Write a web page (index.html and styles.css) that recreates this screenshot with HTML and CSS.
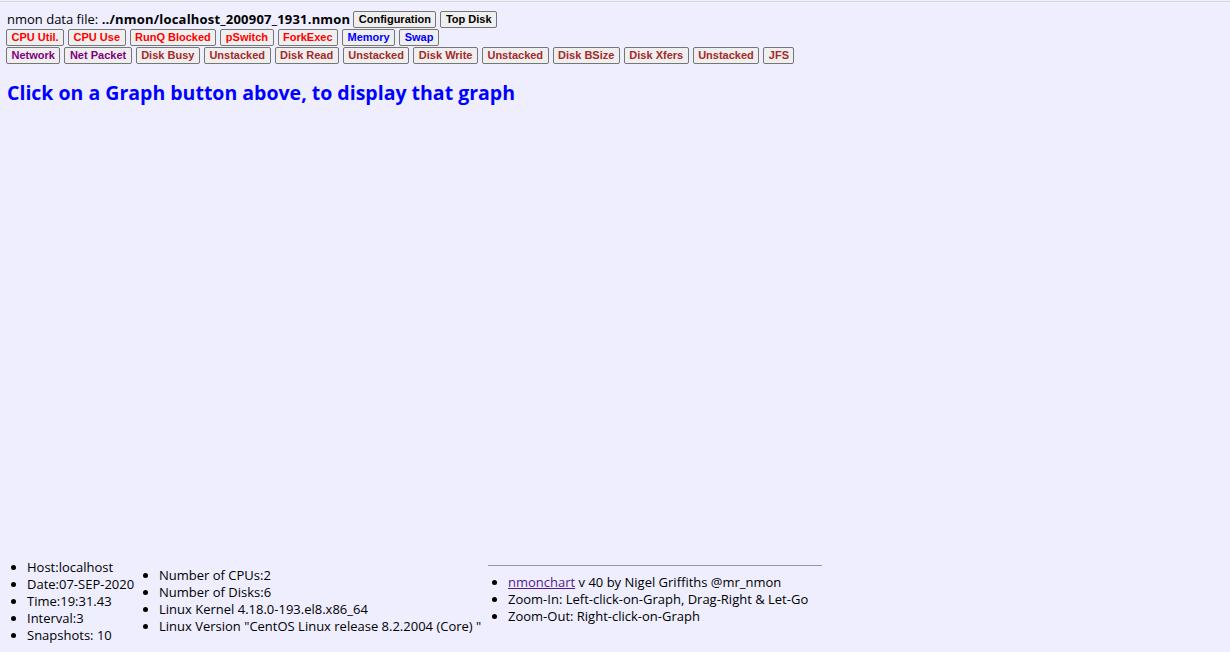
FILE: index.html
```html
<!DOCTYPE html>
<html>
<head>
<meta charset="utf-8">
<title>nmonchart</title>
<link rel="stylesheet" href="styles.css">
</head>
<body>
<div class="page">
  <div class="row">
    <span class="label">nmon data file: <b>../nmon/localhost_200907_1931.nmon</b></span>
    <button class="btn black">Configuration</button>
    <button class="btn black">Top Disk</button>
  </div>
  <div class="row">
    <button class="btn red">CPU Util.</button>
    <button class="btn red">CPU Use</button>
    <button class="btn red">RunQ Blocked</button>
    <button class="btn red">pSwitch</button>
    <button class="btn red">ForkExec</button>
    <button class="btn blue">Memory</button>
    <button class="btn blue">Swap</button>
  </div>
  <div class="row">
    <button class="btn purple">Network</button>
    <button class="btn purple">Net Packet</button>
    <button class="btn brown">Disk Busy</button>
    <button class="btn brown">Unstacked</button>
    <button class="btn brown">Disk Read</button>
    <button class="btn brown">Unstacked</button>
    <button class="btn brown">Disk Write</button>
    <button class="btn brown">Unstacked</button>
    <button class="btn brown">Disk BSize</button>
    <button class="btn brown">Disk Xfers</button>
    <button class="btn brown">Unstacked</button>
    <button class="btn brown">JFS</button>
  </div>
  <h3 class="title">Click on a Graph button above, to display that graph</h3>
  <div class="graph"></div>
  <div class="info">
    <div class="cell first">
      <ul class="list">
        <li>Host:localhost</li>
        <li>Date:07-SEP-2020</li>
        <li>Time:19:31.43</li>
        <li>Interval:3</li>
        <li>Snapshots: 10</li>
      </ul>
    </div>
    <div class="cell second">
      <ul class="list">
        <li>Number of CPUs:2</li>
        <li>Number of Disks:6</li>
        <li>Linux Kernel 4.18.0-193.el8.x86_64</li>
        <li>Linux Version "CentOS Linux release 8.2.2004 (Core) "</li>
      </ul>
    </div>
    <div class="cell third">
      <hr class="rule">
      <ul class="list">
        <li><a class="link" href="#">nmonchart</a> v 40 by Nigel Griffiths @mr_nmon</li>
        <li>Zoom-In: Left-click-on-Graph, Drag-Right &amp; Let-Go</li>
        <li>Zoom-Out: Right-click-on-Graph</li>
      </ul>
    </div>
  </div>
</div>
</body>
</html>
```

FILE: styles.css
```css
html {
  background: #eeeeff;
}
body {
  margin: 0;
  border-top: 1px solid #d4d4d4;
  margin-top: 1px;
  font-family: "Open Sans", "Noto Sans", sans-serif;
  font-size: 13px;
  color: #000;
}
.page {
  padding: 8px 6px 0 6px;
}
.row {
  display: flex;
  align-items: center;
  gap: 4px;
  height: 18px;
}
.label {
  margin-left: 1px;
  margin-right: -1px;
  white-space: nowrap;
}
.label b {
  font-weight: 700;
  letter-spacing: 0.2px;
}
.btn {
  font-family: "Liberation Sans", Arial, sans-serif;
  font-size: 11px;
  font-weight: 700;
  height: 17px;
  padding: 0 4.5px;
  background: #efefef;
  border: 1px solid #767676;
  border-radius: 2px;
  line-height: 15px;
  white-space: nowrap;
}
.black { color: #000; }
.red { color: #ff0000; }
.blue { color: #0000ff; }
.purple { color: #800080; }
.brown { color: #a52a2a; }
.title {
  margin: 16px 0 0 1px;
  font-size: 19.5px;
  font-weight: 700;
  color: #0000ff;
  line-height: 26px;
}
.graph {
  height: 453px;
}
.info {
  display: flex;
  align-items: center;
  margin-left: 1px;
}
.cell {
  padding: 0;
}
.first {
  width: 132px;
}
.second {
  width: 349px;
  margin-top: -1px;
}
.third {
  align-self: flex-start;
  padding-top: 6px;
  min-width: 334px;
}
.list {
  margin: 0;
  padding-left: 20px;
  line-height: 17px;
}
.rule {
  margin: 0 0 8px 0;
  border: 0;
  border-top: 1px solid #999;
}
.link {
  color: #551a8b;
}
```
